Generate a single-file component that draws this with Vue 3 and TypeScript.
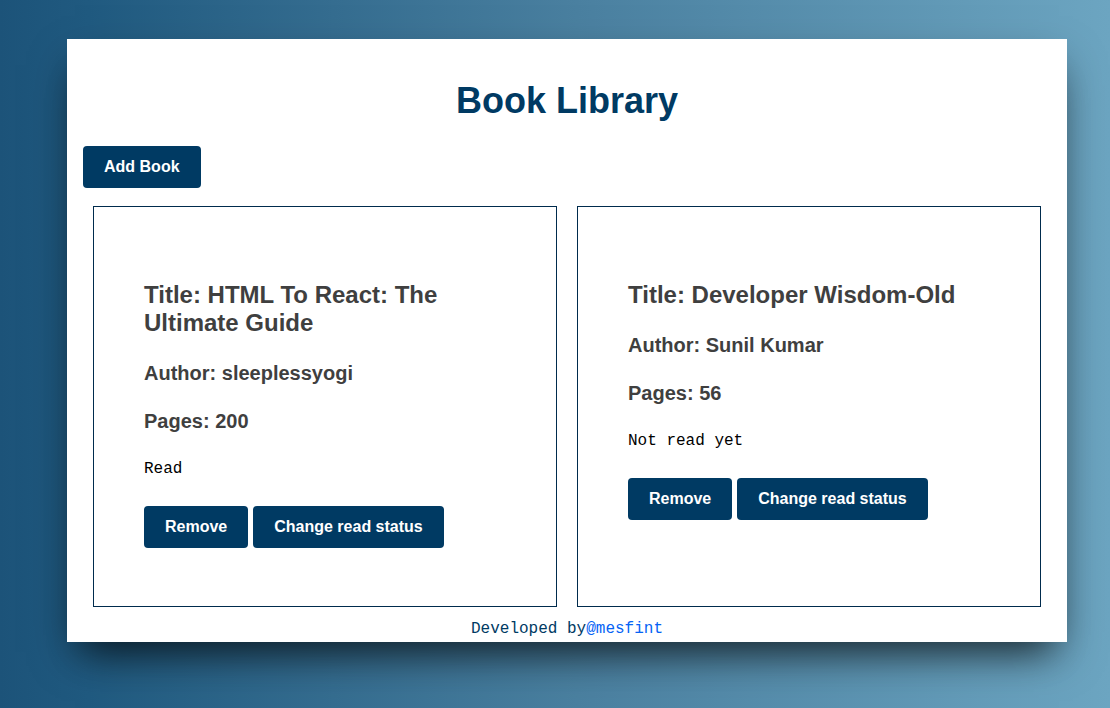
<script setup lang="ts">
import { ref } from 'vue'

interface Book {
  id: number
  title: string
  author: string
  pages: number
  read: boolean
}

const books = ref<Book[]>([
  { id: 1, title: 'HTML To React: The Ultimate Guide', author: 'sleeplessyogi', pages: 200, read: true },
  { id: 2, title: 'Developer Wisdom-Old', author: 'Sunil Kumar', pages: 56, read: false },
])

function removeBook(id: number): void {
  books.value = books.value.filter((book) => book.id !== id)
}

function toggleRead(book: Book): void {
  book.read = !book.read
}
</script>

<template>
  <div class="page">
    <main class="library">
      <h1 class="heading">Book Library</h1>
      <div class="toolbar">
        <button type="button" class="btn">Add Book</button>
      </div>
      <section class="books">
        <article v-for="book in books" :key="book.id" class="card">
          <h2 class="title">Title: {{ book.title }}</h2>
          <h3 class="detail">Author: {{ book.author }}</h3>
          <h3 class="detail">Pages: {{ book.pages }}</h3>
          <p class="status">{{ book.read ? 'Read' : 'Not read yet' }}</p>
          <div class="actions">
            <button type="button" class="btn" @click="removeBook(book.id)">Remove</button>
            <button type="button" class="btn" @click="toggleRead(book)">Change read status</button>
          </div>
        </article>
      </section>
      <footer class="footer">Developed by<a class="link" href="#">@mesfint</a></footer>
    </main>
  </div>
</template>

<style>
body {
  margin: 0;
}
</style>

<style scoped>
.page {
  box-sizing: border-box;
  min-height: 100vh;
  padding: 39px 43px 40px 67px;
  background: linear-gradient(90deg, #1c5379 0%, #205a80 8%, #4a80a0 52%, #6ca5c1 100%);
  font-family: "Liberation Mono", "Courier New", monospace;
  font-size: 16px;
}

.library {
  box-sizing: border-box;
  max-width: 1000px;
  margin: 0 auto;
  padding: 41px 16px 1px;
  background: #fff;
  box-shadow:
    0 18px 40px -8px rgba(0, 0, 0, 0.5),
    0 26px 36px -20px rgba(0, 0, 0, 0.45);
}

.heading {
  margin: 0 0 24px;
  color: #003a63;
  font-family: "Liberation Sans", Arial, sans-serif;
  font-size: 36px;
  line-height: 42px;
  text-align: center;
}

.toolbar {
  margin-bottom: 18px;
}

.books {
  display: grid;
  grid-template-columns: repeat(2, minmax(0, 1fr));
  gap: 20px;
  margin: 0 10px;
}

.card {
  padding: 74px 50px 58px;
  border: 1px solid #002b4d;
}

.title,
.detail {
  margin: 0 0 24px;
  color: #3f3f3f;
  font-family: "Liberation Sans", Arial, sans-serif;
}

.title {
  font-size: 24px;
  line-height: 28px;
}

.detail {
  font-size: 20px;
  line-height: 24px;
}

.status {
  margin: 0 0 25px;
  color: #000;
  line-height: 24px;
}

.actions {
  display: flex;
  flex-wrap: wrap;
  gap: 5px;
}

.btn {
  display: block;
  padding: 12px 21px;
  border: 0;
  border-radius: 4px;
  background: #003a63;
  color: #fff;
  font-family: "Liberation Sans", Arial, sans-serif;
  font-size: 16px;
  font-weight: 700;
  line-height: 18px;
  cursor: pointer;
}

.footer {
  margin-top: 10px;
  color: #003a63;
  line-height: 24px;
  text-align: center;
}

.link {
  color: #0563f5;
  text-decoration: none;
}
</style>
